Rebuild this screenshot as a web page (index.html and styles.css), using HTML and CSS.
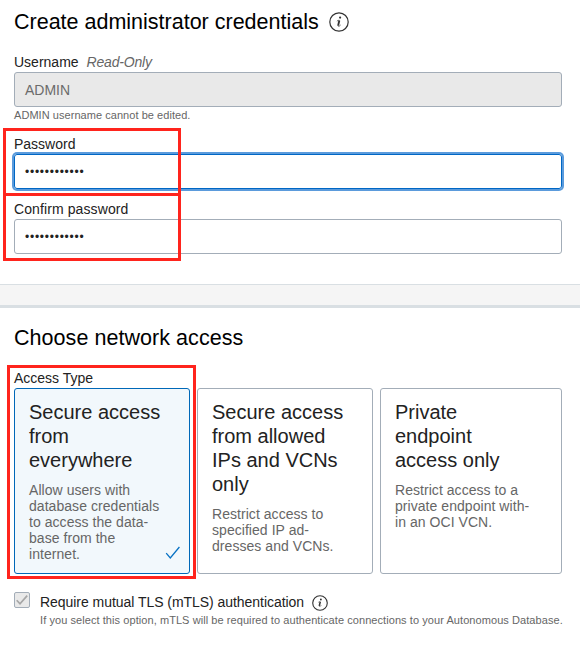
FILE: index.html
```html
<!DOCTYPE html>
<html lang="en">
<head>
<meta charset="utf-8">
<title>Create Autonomous Database</title>
<link rel="stylesheet" href="styles.css">
</head>
<body>
<section class="credentials">
  <h2 class="heading"><span>Create administrator credentials</span>
    <svg class="info" width="20" height="20" viewBox="0 0 20 20"><circle cx="10" cy="10" r="9.2"/><circle class="fill" cx="11.1" cy="5.6" r="1.1"/><path class="stem" d="M10.3 8.6L9.1 13.6"/><path class="serif" d="M7.9 9.2C8.9 8.3 9.8 8.2 10.6 8.4M9 13.6C9.1 14.7 10.4 14.4 11.6 13"/></svg>
  </h2>
  <div class="field field-user">
    <div class="label"><span>Username</span><em class="readonly">Read-Only</em></div>
    <div class="input disabled">ADMIN</div>
    <div class="hint">ADMIN username cannot be edited.</div>
  </div>
  <div class="field marked">
    <div class="label">Password</div>
    <div class="input secret focused">••••••••••••</div>
    <div class="mark"></div>
  </div>
  <div class="field marked second">
    <div class="label confirm">Confirm password</div>
    <div class="input secret">••••••••••••</div>
    <div class="mark"></div>
  </div>
</section>
<div class="band"></div>
<section class="network">
  <h2 class="heading choose"><span>Choose network access</span></h2>
  <div class="access">
    <div class="label">Access Type</div>
    <div class="cards">
      <div class="card selected">
        <h3>Secure access<br>from<br>everywhere</h3>
        <p>Allow users with<br>database credentials<br>to access the data-<br>base from the<br>internet.</p>
        <svg class="tick" width="16" height="14" viewBox="0 0 16 14"><path d="M1.2 7.2L5.3 12L14.4 1"/></svg>
      </div>
      <div class="card">
        <h3>Secure access<br>from allowed<br>IPs and VCNs<br>only</h3>
        <p>Restrict access to<br>specified IP ad-<br>dresses and VCNs.</p>
      </div>
      <div class="card">
        <h3>Private<br>endpoint<br>access only</h3>
        <p>Restrict access to a<br>private endpoint with-<br>in an OCI VCN.</p>
      </div>
    </div>
    <div class="mark"></div>
  </div>
  <div class="option">
    <div class="checkbox"><svg width="14" height="14" viewBox="0 0 14 14"><path d="M1.7 7.2L5 10.8L12.2 2.6"/></svg></div>
    <div class="option-text">
      <div class="option-title"><span>Require mutual TLS (mTLS) authentication</span>
        <svg class="info" width="16" height="16" viewBox="0 0 20 20"><circle cx="10" cy="10" r="9.1"/><circle class="fill" cx="11.1" cy="5.6" r="1.2"/><path class="stem" d="M10.3 8.6L9.1 13.6"/><path class="serif" d="M7.9 9.2C8.9 8.3 9.8 8.2 10.6 8.4M9 13.6C9.1 14.7 10.4 14.4 11.6 13"/></svg>
      </div>
      <div class="note">If you select this option, mTLS will be required to authenticate connections to your Autonomous Database.</div>
    </div>
  </div>
</section>
</body>
</html>
```
FILE: styles.css
```css
* { box-sizing: border-box; }
body {
  margin: 0;
  background: #fff;
  color: #222;
  font-family: "Liberation Sans", Arial, sans-serif;
  font-size: 14px;
}
h2, h3, p { margin: 0; font-weight: 400; }
svg { flex: none; fill: none; }

.credentials { height: 284px; padding: 8px 18px 0 14px; }
.heading {
  display: flex;
  align-items: center;
  gap: 10px;
  height: 28px;
  font-size: 21.5px;
  line-height: 28px;
  color: #000;
  white-space: nowrap;
}
.choose { letter-spacing: 0.05px; }
.info { stroke: #333; stroke-width: 1.2; }
.info .fill { fill: #333; stroke: none; }
.info .stem { stroke-width: 1.9; }
.info .serif { stroke-width: 0.8; }

.field { position: relative; }
.field-user { margin-top: 18px; }
.label { height: 18px; line-height: 17px; white-space: nowrap; }
.readonly { margin-left: 8px; color: #666; letter-spacing: -0.2px; }
.confirm { letter-spacing: 0.1px; }
.input {
  height: 35px;
  padding-left: 10px;
  border: 1px solid #a3adb8;
  border-radius: 3px;
  line-height: 33px;
}
.disabled { background: #e9e9e9; color: #6b6b6b; line-height: 35px; }
.secret { font-size: 12px; line-height: 35px; letter-spacing: 0.75px; }
.focused { border-color: #0067c5; box-shadow: 0 0 0 2px #5b9bdc; }
.hint { height: 29px; font-size: 11px; line-height: 17px; letter-spacing: 0.05px; color: #666; }
.second { margin-top: 12px; }
.mark { position: absolute; border: 3px solid #ff241d; pointer-events: none; }
.marked .mark { left: -11px; top: -8px; width: 178px; height: 68px; }

.band {
  height: 24px;
  background: #f5f5f5;
  border-top: 1px solid #d9dfe3;
  border-bottom: 3px solid #d9dfe3;
}

.network { padding: 16px 18px 0 14px; }
.access { position: relative; margin-top: 18px; }
.access .mark { left: -7px; top: -5px; width: 189px; height: 214px; }
.cards { display: grid; grid-template-columns: 176px 176px 182px; gap: 7px; }
.card {
  position: relative;
  height: 186px;
  padding: 11px 14px;
  border: 1px solid #a3adb8;
  border-radius: 3px;
  white-space: nowrap;
}
.card h3 { font-size: 20px; line-height: 24px; }
.card p { margin-top: 10px; line-height: 16px; letter-spacing: 0.05px; color: #666; }
.selected { background: #f2f8fc; border-color: #0068b8; }
.tick { position: absolute; right: 8px; bottom: 13px; stroke: #0872c4; stroke-width: 1.3; }

.option { display: flex; gap: 10px; margin-top: 18px; }
.checkbox {
  width: 16px;
  height: 16px;
  border: 1px solid #a3adb8;
  border-radius: 2px;
  background: #e9e9e9;
}
.checkbox svg { display: block; stroke: #a6a6a6; stroke-width: 1.7; }
.option-title { display: flex; align-items: center; gap: 8px; height: 20px; letter-spacing: -0.045px; white-space: nowrap; }
.option-title .info { margin-top: 2px; stroke-width: 1.4; }
.note { font-size: 11px; line-height: 16px; letter-spacing: 0.07px; color: #666; white-space: nowrap; }
```
